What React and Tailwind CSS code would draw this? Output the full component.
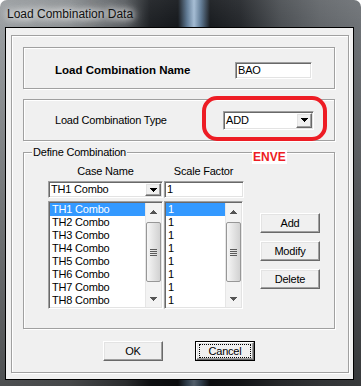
import React from 'react';

const SUNKEN =
  'border border-t-[#a0a0a0] border-l-[#a0a0a0] border-b-white border-r-white shadow-[inset_1px_1px_0_#696969,inset_-1px_-1px_0_#e3e3e3]';
const RAISED =
  'border border-t-white border-l-white border-b-[#696969] border-r-[#696969] shadow-[inset_-1px_-1px_0_#a0a0a0,inset_1px_1px_0_#e3e3e3] bg-[#f0f0f0]';
const ETCHED = 'border border-[#a0a0a0] shadow-[inset_1px_1px_0_#fff,1px_1px_0_#fff]';

const Arrow = ({ up, color = '#000' }) => (
  <svg width="7" height="4" viewBox="0 0 7 4" shapeRendering="crispEdges">
    <polygon points={up ? '0,4 7,4 3.5,0' : '0,0 7,0 3.5,4'} fill={color} />
  </svg>
);

const Field = ({ value, className }) => (
  <div className={`${SUNKEN} bg-white flex items-center pl-[2px] ${className}`}>{value}</div>
);

const Combo = ({ value, className }) => (
  <div className={`${SUNKEN} bg-white flex items-stretch p-[1px] ${className}`}>
    <div className="flex-1 flex items-center pl-[1px]">{value}</div>
    <div className={`${RAISED} w-[16px] flex items-center justify-center`}>
      <Arrow />
    </div>
  </div>
);

const ScrollBar = () => (
  <div className="w-[16px] h-full flex flex-col bg-[#f3f3f3] border-l border-[#e6e6e6]">
    <div className="h-[17px] flex items-center justify-center">
      <Arrow up color="#555" />
    </div>
    <div className="mt-[2px] h-[60px] rounded-[2px] border border-[#979797] bg-[linear-gradient(to_right,#f6f6f6,#e4e4e4_50%,#d2d2d2)] flex flex-col items-center justify-center gap-[1px]">
      <div className="w-[7px] h-px bg-[#5a5a5a]" />
      <div className="w-[7px] h-px bg-[#5a5a5a]" />
      <div className="w-[7px] h-px bg-[#5a5a5a]" />
      <div className="w-[7px] h-px bg-[#5a5a5a]" />
    </div>
    <div className="flex-1" />
    <div className="h-[17px] flex items-center justify-center">
      <Arrow color="#555" />
    </div>
  </div>
);

const ListBox = ({ items, className }) => (
  <div className={`${SUNKEN} bg-white h-[108px] flex p-[1px] ${className}`}>
    <div className="flex-1 flex flex-col">
      {items.map((t, i) => (
        <div
          key={i}
          className={`h-[13px] leading-[13px] pl-[2px] ${i === 0 ? 'bg-[#3399ff] text-white' : 'text-black'}`}
        >
          {t}
        </div>
      ))}
    </div>
    <ScrollBar />
  </div>
);

const Btn = ({ children, def }) => (
  <div className={`w-[60px] h-[20px] flex ${def ? 'border border-black' : ''}`}>
    <div className={`${RAISED} flex-1 flex items-center justify-center`}>{children}</div>
  </div>
);

const cases = ['TH1 Combo', 'TH2 Combo', 'TH3 Combo', 'TH4 Combo', 'TH5 Combo', 'TH6 Combo', 'TH7 Combo', 'TH8 Combo'];
const factors = ['1', '1', '1', '1', '1', '1', '1', '1'];

export default function App() {
  return (
    <div className="w-[361px] h-[386px] bg-white font-['Liberation_Sans',Arial,sans-serif] overflow-hidden">
      <div className="w-[361px] h-[386px] rounded-t-[7px] flex flex-col bg-[linear-gradient(to_bottom,rgba(255,255,255,0.06)_0px,rgba(0,0,0,0)_27px,rgba(0,0,0,0.5)_386px),linear-gradient(to_right,#9a9ea1_0px,#8a8e91_70px,#55595d_125px,#1d2024_150px,#15181c_178px,#5d7893_187px,#a3bbd3_194px,#5d7893_201px,#181b1f_210px,#24272b_240px,#4b4f53_280px,#62666a_320px,#6e7276_361px)]">
        {/* title bar */}
        <div className="h-[27px] pl-[7px] flex items-center">
          <span className="text-[12px] text-[#111] [text-shadow:0_0_6px_#fff,0_0_10px_#fff,0_0_14px_#eee]">
            Load Combination Data
          </span>
        </div>

        {/* client */}
        <div className="ml-[5px] w-[349px] h-[353px] border border-black bg-[#f0f0f0] text-[11px] tracking-[-0.2px] text-black">
          <div className={`mt-[7px] ml-[5px] w-[338px] h-[338px] ${ETCHED} pl-[11px] pt-[11px] flex flex-col`}>
            {/* name */}
            <div className={`w-[312px] h-[42px] ${ETCHED} flex items-center pt-[5px]`}>
              <span className="pl-[31px] font-bold text-[11.5px] tracking-normal">Load Combination Name</span>
              <Field value="BAO" className="ml-auto mr-[22px] w-[77px] h-[17px]" />
            </div>

            {/* type */}
            <div className={`relative mt-[10px] w-[312px] h-[42px] ${ETCHED} flex items-center`}>
              <span className="pl-[31px]">Load Combination Type</span>
              <Combo value="ADD" className="ml-auto mr-[20px] w-[91px] h-[19px]" />
              <div className="absolute left-[178px] -top-[4px] w-[125px] h-[45px] border-[4px] border-[#ed1c24] rounded-[15px]" />
            </div>

            {/* define combination */}
            <div className={`relative mt-[11px] w-[312px] h-[177px] ${ETCHED} pl-[24px] pt-[12px] flex`}>
              <span className="absolute left-[8px] -top-[7px] px-[1px] leading-[13px] bg-[#f0f0f0]">
                Define Combination
              </span>
              <span className="absolute left-[228px] -top-[3px] px-[1px] leading-[14px] bg-white text-[12px] font-bold text-[#ed1c24] tracking-normal">
                ENVE
              </span>

              <div className="w-[115px] flex flex-col">
                <div className="h-[13px] leading-[13px] text-center">Case Name</div>
                <Combo value="TH1 Combo" className="mt-[3px] w-[115px] h-[17px]" />
                <ListBox items={cases} className="mt-[3px] w-[115px]" />
              </div>

              <div className="ml-[1px] w-[79px] flex flex-col">
                <div className="h-[13px] leading-[13px] text-center">Scale Factor</div>
                <Field value="1" className="mt-[3px] w-[80px] h-[17px]" />
                <ListBox items={factors} className="mt-[3px] w-[79px]" />
              </div>

              <div className="ml-[17px] pt-[48px] flex flex-col gap-[8px]">
                <Btn>Add</Btn>
                <Btn>Modify</Btn>
                <Btn>Delete</Btn>
              </div>
            </div>

            {/* ok / cancel */}
            <div className="mt-[12px] w-[312px] flex justify-center gap-[32px]">
              <Btn>OK</Btn>
              <Btn def>
                <span className="w-[52px] h-[14px] border border-dotted border-black flex items-center justify-center">
                  Cancel
                </span>
              </Btn>
            </div>
          </div>
        </div>
      </div>
    </div>
  );
}
